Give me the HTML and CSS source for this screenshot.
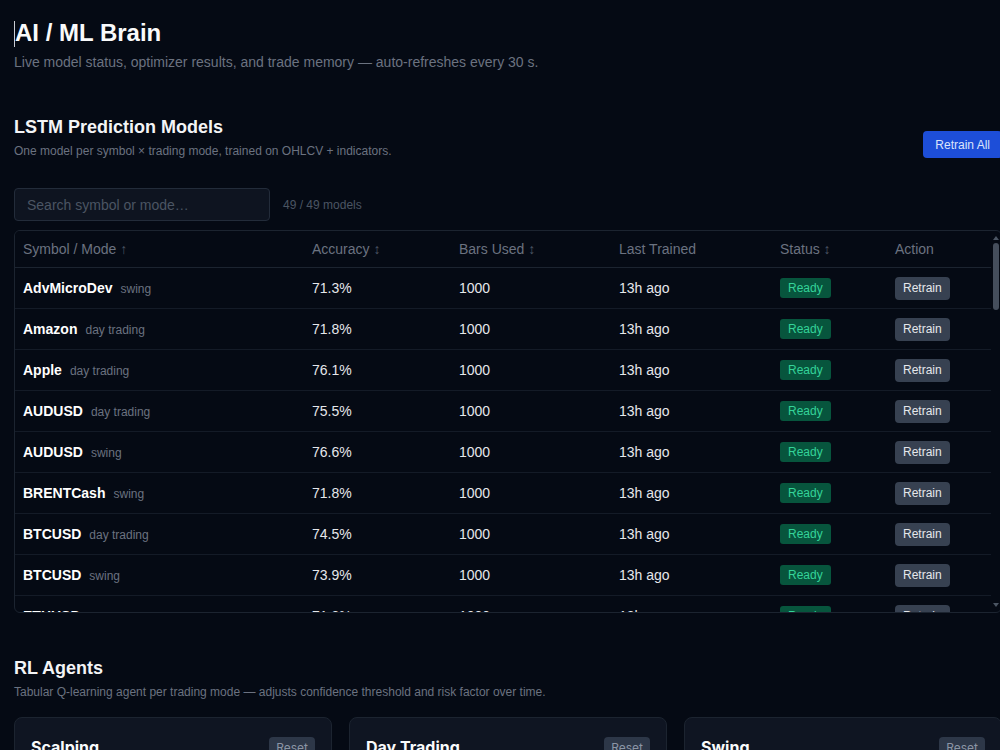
FILE: index.html
```html
<!DOCTYPE html>
<html lang="en">
<head>
<meta charset="utf-8">
<title>AI / ML Brain</title>
<link rel="stylesheet" href="styles.css">
</head>
<body>
<main class="page">
  <header class="page-head">
    <h1><span class="caret"></span>AI / ML Brain</h1>
    <p class="lead">Live model status, optimizer results, and trade memory — auto-refreshes every 30 s.</p>
  </header>

  <section class="section">
    <div class="section-head">
      <div>
        <h2>LSTM Prediction Models</h2>
        <p class="note">One model per symbol × trading mode, trained on OHLCV + indicators.</p>
      </div>
      <button class="btn-primary">Retrain All</button>
    </div>

    <div class="search-row">
      <input class="search" type="text" placeholder="Search symbol or mode…">
      <span class="count">49 / 49 models</span>
    </div>

    <div class="table-frame">
      <div class="table-wrap">
        <table class="models">
          <colgroup>
            <col class="c-sym"><col class="c-acc"><col class="c-bars"><col class="c-last"><col class="c-status"><col>
          </colgroup>
          <thead>
            <tr>
              <th>Symbol / Mode <span class="sort">↑</span></th>
              <th>Accuracy <span class="sort">↕</span></th>
              <th>Bars Used <span class="sort">↕</span></th>
              <th>Last Trained</th>
              <th>Status <span class="sort">↕</span></th>
              <th>Action</th>
            </tr>
          </thead>
          <tbody>
            <tr><td><span class="sym">AdvMicroDev</span><span class="mode">swing</span></td><td>71.3%</td><td>1000</td><td>13h ago</td><td><span class="badge">Ready</span></td><td><button class="btn-sm">Retrain</button></td></tr>
            <tr><td><span class="sym">Amazon</span><span class="mode">day trading</span></td><td>71.8%</td><td>1000</td><td>13h ago</td><td><span class="badge">Ready</span></td><td><button class="btn-sm">Retrain</button></td></tr>
            <tr><td><span class="sym">Apple</span><span class="mode">day trading</span></td><td>76.1%</td><td>1000</td><td>13h ago</td><td><span class="badge">Ready</span></td><td><button class="btn-sm">Retrain</button></td></tr>
            <tr><td><span class="sym">AUDUSD</span><span class="mode">day trading</span></td><td>75.5%</td><td>1000</td><td>13h ago</td><td><span class="badge">Ready</span></td><td><button class="btn-sm">Retrain</button></td></tr>
            <tr><td><span class="sym">AUDUSD</span><span class="mode">swing</span></td><td>76.6%</td><td>1000</td><td>13h ago</td><td><span class="badge">Ready</span></td><td><button class="btn-sm">Retrain</button></td></tr>
            <tr><td><span class="sym">BRENTCash</span><span class="mode">swing</span></td><td>71.8%</td><td>1000</td><td>13h ago</td><td><span class="badge">Ready</span></td><td><button class="btn-sm">Retrain</button></td></tr>
            <tr><td><span class="sym">BTCUSD</span><span class="mode">day trading</span></td><td>74.5%</td><td>1000</td><td>13h ago</td><td><span class="badge">Ready</span></td><td><button class="btn-sm">Retrain</button></td></tr>
            <tr><td><span class="sym">BTCUSD</span><span class="mode">swing</span></td><td>73.9%</td><td>1000</td><td>13h ago</td><td><span class="badge">Ready</span></td><td><button class="btn-sm">Retrain</button></td></tr>
            <tr><td><span class="sym">ETHUSD</span><span class="mode">day trading</span></td><td>71.8%</td><td>1000</td><td>13h ago</td><td><span class="badge">Ready</span></td><td><button class="btn-sm">Retrain</button></td></tr>
            <tr><td><span class="sym">ETHUSD</span><span class="mode">swing</span></td><td>72.4%</td><td>1000</td><td>13h ago</td><td><span class="badge">Ready</span></td><td><button class="btn-sm">Retrain</button></td></tr>
            <tr><td><span class="sym">EURGBP</span><span class="mode">day trading</span></td><td>74.0%</td><td>1000</td><td>13h ago</td><td><span class="badge">Ready</span></td><td><button class="btn-sm">Retrain</button></td></tr>
            <tr><td><span class="sym">EURJPY</span><span class="mode">swing</span></td><td>73.2%</td><td>1000</td><td>13h ago</td><td><span class="badge">Ready</span></td><td><button class="btn-sm">Retrain</button></td></tr>
            <tr><td><span class="sym">EURUSD</span><span class="mode">day trading</span></td><td>75.9%</td><td>1000</td><td>13h ago</td><td><span class="badge">Ready</span></td><td><button class="btn-sm">Retrain</button></td></tr>
            <tr><td><span class="sym">EURUSD</span><span class="mode">scalping</span></td><td>70.6%</td><td>1000</td><td>13h ago</td><td><span class="badge">Ready</span></td><td><button class="btn-sm">Retrain</button></td></tr>
            <tr><td><span class="sym">EURUSD</span><span class="mode">swing</span></td><td>76.2%</td><td>1000</td><td>13h ago</td><td><span class="badge">Ready</span></td><td><button class="btn-sm">Retrain</button></td></tr>
            <tr><td><span class="sym">GBPJPY</span><span class="mode">day trading</span></td><td>72.7%</td><td>1000</td><td>13h ago</td><td><span class="badge">Ready</span></td><td><button class="btn-sm">Retrain</button></td></tr>
            <tr><td><span class="sym">GBPJPY</span><span class="mode">swing</span></td><td>73.5%</td><td>1000</td><td>13h ago</td><td><span class="badge">Ready</span></td><td><button class="btn-sm">Retrain</button></td></tr>
            <tr><td><span class="sym">GBPUSD</span><span class="mode">day trading</span></td><td>74.8%</td><td>1000</td><td>13h ago</td><td><span class="badge">Ready</span></td><td><button class="btn-sm">Retrain</button></td></tr>
            <tr><td><span class="sym">GBPUSD</span><span class="mode">scalping</span></td><td>70.9%</td><td>1000</td><td>13h ago</td><td><span class="badge">Ready</span></td><td><button class="btn-sm">Retrain</button></td></tr>
            <tr><td><span class="sym">GBPUSD</span><span class="mode">swing</span></td><td>75.1%</td><td>1000</td><td>13h ago</td><td><span class="badge">Ready</span></td><td><button class="btn-sm">Retrain</button></td></tr>
            <tr><td><span class="sym">GER40</span><span class="mode">day trading</span></td><td>72.1%</td><td>1000</td><td>13h ago</td><td><span class="badge">Ready</span></td><td><button class="btn-sm">Retrain</button></td></tr>
            <tr><td><span class="sym">GER40</span><span class="mode">swing</span></td><td>73.0%</td><td>1000</td><td>13h ago</td><td><span class="badge">Ready</span></td><td><button class="btn-sm">Retrain</button></td></tr>
            <tr><td><span class="sym">Google</span><span class="mode">day trading</span></td><td>74.3%</td><td>1000</td><td>13h ago</td><td><span class="badge">Ready</span></td><td><button class="btn-sm">Retrain</button></td></tr>
            <tr><td><span class="sym">Google</span><span class="mode">swing</span></td><td>75.0%</td><td>1000</td><td>13h ago</td><td><span class="badge">Ready</span></td><td><button class="btn-sm">Retrain</button></td></tr>
            <tr><td><span class="sym">Meta</span><span class="mode">swing</span></td><td>72.9%</td><td>1000</td><td>13h ago</td><td><span class="badge">Ready</span></td><td><button class="btn-sm">Retrain</button></td></tr>
            <tr><td><span class="sym">Microsoft</span><span class="mode">day trading</span></td><td>76.4%</td><td>1000</td><td>13h ago</td><td><span class="badge">Ready</span></td><td><button class="btn-sm">Retrain</button></td></tr>
            <tr><td><span class="sym">Microsoft</span><span class="mode">swing</span></td><td>75.7%</td><td>1000</td><td>13h ago</td><td><span class="badge">Ready</span></td><td><button class="btn-sm">Retrain</button></td></tr>
            <tr><td><span class="sym">Netflix</span><span class="mode">swing</span></td><td>71.5%</td><td>1000</td><td>13h ago</td><td><span class="badge">Ready</span></td><td><button class="btn-sm">Retrain</button></td></tr>
            <tr><td><span class="sym">NVIDIA</span><span class="mode">day trading</span></td><td>73.8%</td><td>1000</td><td>13h ago</td><td><span class="badge">Ready</span></td><td><button class="btn-sm">Retrain</button></td></tr>
            <tr><td><span class="sym">NVIDIA</span><span class="mode">swing</span></td><td>74.6%</td><td>1000</td><td>13h ago</td><td><span class="badge">Ready</span></td><td><button class="btn-sm">Retrain</button></td></tr>
            <tr><td><span class="sym">NZDUSD</span><span class="mode">swing</span></td><td>72.2%</td><td>1000</td><td>13h ago</td><td><span class="badge">Ready</span></td><td><button class="btn-sm">Retrain</button></td></tr>
            <tr><td><span class="sym">Tesla</span><span class="mode">day trading</span></td><td>71.1%</td><td>1000</td><td>13h ago</td><td><span class="badge">Ready</span></td><td><button class="btn-sm">Retrain</button></td></tr>
            <tr><td><span class="sym">Tesla</span><span class="mode">swing</span></td><td>72.8%</td><td>1000</td><td>13h ago</td><td><span class="badge">Ready</span></td><td><button class="btn-sm">Retrain</button></td></tr>
            <tr><td><span class="sym">UK100</span><span class="mode">day trading</span></td><td>73.3%</td><td>1000</td><td>13h ago</td><td><span class="badge">Ready</span></td><td><button class="btn-sm">Retrain</button></td></tr>
            <tr><td><span class="sym">US30</span><span class="mode">day trading</span></td><td>74.1%</td><td>1000</td><td>13h ago</td><td><span class="badge">Ready</span></td><td><button class="btn-sm">Retrain</button></td></tr>
            <tr><td><span class="sym">US30</span><span class="mode">swing</span></td><td>75.3%</td><td>1000</td><td>13h ago</td><td><span class="badge">Ready</span></td><td><button class="btn-sm">Retrain</button></td></tr>
            <tr><td><span class="sym">US500</span><span class="mode">day trading</span></td><td>76.0%</td><td>1000</td><td>13h ago</td><td><span class="badge">Ready</span></td><td><button class="btn-sm">Retrain</button></td></tr>
            <tr><td><span class="sym">US500</span><span class="mode">scalping</span></td><td>70.4%</td><td>1000</td><td>13h ago</td><td><span class="badge">Ready</span></td><td><button class="btn-sm">Retrain</button></td></tr>
            <tr><td><span class="sym">US500</span><span class="mode">swing</span></td><td>75.6%</td><td>1000</td><td>13h ago</td><td><span class="badge">Ready</span></td><td><button class="btn-sm">Retrain</button></td></tr>
            <tr><td><span class="sym">USDCAD</span><span class="mode">day trading</span></td><td>73.6%</td><td>1000</td><td>13h ago</td><td><span class="badge">Ready</span></td><td><button class="btn-sm">Retrain</button></td></tr>
            <tr><td><span class="sym">USDCAD</span><span class="mode">swing</span></td><td>74.2%</td><td>1000</td><td>13h ago</td><td><span class="badge">Ready</span></td><td><button class="btn-sm">Retrain</button></td></tr>
            <tr><td><span class="sym">USDCHF</span><span class="mode">swing</span></td><td>72.5%</td><td>1000</td><td>13h ago</td><td><span class="badge">Ready</span></td><td><button class="btn-sm">Retrain</button></td></tr>
            <tr><td><span class="sym">USDJPY</span><span class="mode">day trading</span></td><td>75.2%</td><td>1000</td><td>13h ago</td><td><span class="badge">Ready</span></td><td><button class="btn-sm">Retrain</button></td></tr>
            <tr><td><span class="sym">USDJPY</span><span class="mode">scalping</span></td><td>71.0%</td><td>1000</td><td>13h ago</td><td><span class="badge">Ready</span></td><td><button class="btn-sm">Retrain</button></td></tr>
            <tr><td><span class="sym">USDJPY</span><span class="mode">swing</span></td><td>76.3%</td><td>1000</td><td>13h ago</td><td><span class="badge">Ready</span></td><td><button class="btn-sm">Retrain</button></td></tr>
            <tr><td><span class="sym">USTEC</span><span class="mode">day trading</span></td><td>74.9%</td><td>1000</td><td>13h ago</td><td><span class="badge">Ready</span></td><td><button class="btn-sm">Retrain</button></td></tr>
            <tr><td><span class="sym">USTEC</span><span class="mode">swing</span></td><td>73.7%</td><td>1000</td><td>13h ago</td><td><span class="badge">Ready</span></td><td><button class="btn-sm">Retrain</button></td></tr>
            <tr><td><span class="sym">XAUUSD</span><span class="mode">day trading</span></td><td>75.8%</td><td>1000</td><td>13h ago</td><td><span class="badge">Ready</span></td><td><button class="btn-sm">Retrain</button></td></tr>
            <tr><td><span class="sym">XAUUSD</span><span class="mode">scalping</span></td><td>71.6%</td><td>1000</td><td>13h ago</td><td><span class="badge">Ready</span></td><td><button class="btn-sm">Retrain</button></td></tr>
          </tbody>
        </table>
      </div>
      <div class="vscroll" aria-hidden="true">
        <span class="arrow arrow-up"></span>
        <span class="thumb"></span>
        <span class="arrow arrow-down"></span>
      </div>
    </div>
  </section>

  <section class="section">
    <h2>RL Agents</h2>
    <p class="note">Tabular Q-learning agent per trading mode — adjusts confidence threshold and risk factor over time.</p>

    <div class="cards">
      <article class="card">
        <div class="card-head"><h3>Scalping</h3><button class="btn-reset">Reset</button></div>
        <div class="card-body">
          <div class="stat"><span>Confidence threshold</span><b>0.62</b></div>
          <div class="stat"><span>Risk factor</span><b>1.00</b></div>
        </div>
      </article>
      <article class="card">
        <div class="card-head"><h3>Day Trading</h3><button class="btn-reset">Reset</button></div>
        <div class="card-body">
          <div class="stat"><span>Confidence threshold</span><b>0.60</b></div>
          <div class="stat"><span>Risk factor</span><b>1.00</b></div>
        </div>
      </article>
      <article class="card">
        <div class="card-head"><h3>Swing</h3><button class="btn-reset">Reset</button></div>
        <div class="card-body">
          <div class="stat"><span>Confidence threshold</span><b>0.58</b></div>
          <div class="stat"><span>Risk factor</span><b>1.00</b></div>
        </div>
      </article>
    </div>
  </section>
</main>
</body>
</html>
```

FILE: styles.css
```css
html {
  overflow: hidden;
  background: #050a14;
}

body {
  margin: 0;
  background: #050a14;
  color: #e5e7eb;
  font-family: "Liberation Sans", Arial, sans-serif;
}

.page {
  width: 988px;
  padding: 19px 14px 40px;
}

h1 {
  margin: 0;
  font-size: 24px;
  line-height: 28px;
  font-weight: 700;
  color: #f9fafb;
}

.caret {
  display: inline-block;
  width: 1px;
  height: 26px;
  background: #c9ccd3;
  vertical-align: -6px;
}

.lead {
  margin: 5px 0 0;
  font-size: 14px;
  line-height: 20px;
  color: #6b7280;
}

.section {
  margin-top: 43px;
}

.section-head {
  display: flex;
  justify-content: space-between;
  align-items: flex-end;
}

h2 {
  margin: 0;
  font-size: 18px;
  line-height: 24px;
  font-weight: 700;
  color: #f3f4f6;
}

.note {
  margin: 4px 0 0;
  font-size: 12px;
  line-height: 16px;
  color: #6b7280;
}

.btn-primary {
  height: 27px;
  padding: 0 12px;
  margin-bottom: 1px;
  background: #1d4ed8;
  color: #dbe4fb;
  border: 0;
  border-radius: 4px;
  font-family: "Liberation Sans", Arial, sans-serif;
  font-size: 12px;
}

.search-row {
  margin-top: 29px;
  display: flex;
  align-items: center;
  gap: 13px;
}

.search {
  box-sizing: border-box;
  width: 256px;
  height: 33px;
  padding: 0 12px;
  background: #0e1420;
  border: 1px solid #232c3a;
  border-radius: 4px;
  color: #e5e7eb;
  font-family: "Liberation Sans", Arial, sans-serif;
  font-size: 14px;
  outline: none;
}

.search::placeholder {
  color: #4b5563;
}

.count {
  font-size: 12px;
  color: #4b5563;
}

.table-frame {
  margin-top: 9px;
  height: 381px;
  display: flex;
  border: 1px solid #1c2430;
  border-radius: 6px;
  overflow: hidden;
}

.table-wrap {
  flex: 1;
  min-width: 0;
  overflow-y: auto;
  scrollbar-width: none;
}

.vscroll {
  width: 10px;
  flex: none;
  display: flex;
  flex-direction: column;
  align-items: center;
}

.arrow {
  width: 0;
  height: 0;
  border-left: 3px solid transparent;
  border-right: 3px solid transparent;
}

.arrow-up {
  margin-top: 5px;
  border-bottom: 4px solid #4b5563;
}

.thumb {
  margin-top: 3px;
  width: 6px;
  height: 67px;
  border-radius: 3px;
  background: #454e5c;
}

.arrow-down {
  margin-top: auto;
  margin-bottom: 5px;
  border-top: 4px solid #4b5563;
}

.models {
  width: 100%;
  border-collapse: separate;
  border-spacing: 0;
  table-layout: fixed;
}

.c-sym { width: 289px; }
.c-acc { width: 147px; }
.c-bars { width: 160px; }
.c-last { width: 161px; }
.c-status { width: 115px; }

.models th {
  position: sticky;
  top: 0;
  height: 36px;
  padding: 0 8px;
  text-align: left;
  font-weight: 400;
  font-size: 14px;
  color: #6b7280;
  background: #050a14;
  border-bottom: 1px solid #1c2430;
}

.sort {
  color: #4b5563;
  font-size: 14px;
}

.models td {
  height: 40px;
  padding: 0 8px;
  font-size: 14px;
  color: #e5e7eb;
  border-bottom: 1px solid #141b27;
  vertical-align: middle;
  white-space: nowrap;
}

.sym {
  font-weight: 700;
  color: #ffffff;
}

.mode {
  margin-left: 8px;
  font-size: 12px;
  color: #6b7280;
}

.badge {
  display: inline-block;
  height: 20px;
  line-height: 20px;
  padding: 0 8px;
  border-radius: 3px;
  background: #07553d;
  color: #34d399;
  font-size: 12px;
}

.btn-sm {
  height: 23px;
  padding: 0 8px;
  border: 0;
  border-radius: 4px;
  background: #374151;
  color: #e5e7eb;
  font-family: "Liberation Sans", Arial, sans-serif;
  font-size: 12px;
}

.cards {
  margin-top: 17px;
  display: grid;
  grid-template-columns: repeat(3, 1fr);
  gap: 17px;
}

.card {
  background: #0f1522;
  border: 1px solid #1c2430;
  border-radius: 8px;
  padding: 19px 16px 16px;
  min-height: 140px;
}

.card-head {
  display: flex;
  justify-content: space-between;
  align-items: center;
}

.card h3 {
  margin: 0;
  font-family: Inter, "Liberation Sans", sans-serif;
  font-size: 16px;
  font-weight: 700;
  color: #f9fafb;
}

.btn-reset {
  height: 20px;
  padding: 0 7px;
  border: 0;
  border-radius: 4px;
  background: #2d3748;
  color: #8b95a5;
  font-family: Inter, "Liberation Sans", sans-serif;
  font-size: 12px;
}

.card-body {
  margin-top: 14px;
  display: flex;
  flex-direction: column;
  gap: 8px;
}

.stat {
  display: flex;
  justify-content: space-between;
  font-size: 13px;
  color: #9ca3af;
}

.stat b {
  color: #e5e7eb;
}
```
